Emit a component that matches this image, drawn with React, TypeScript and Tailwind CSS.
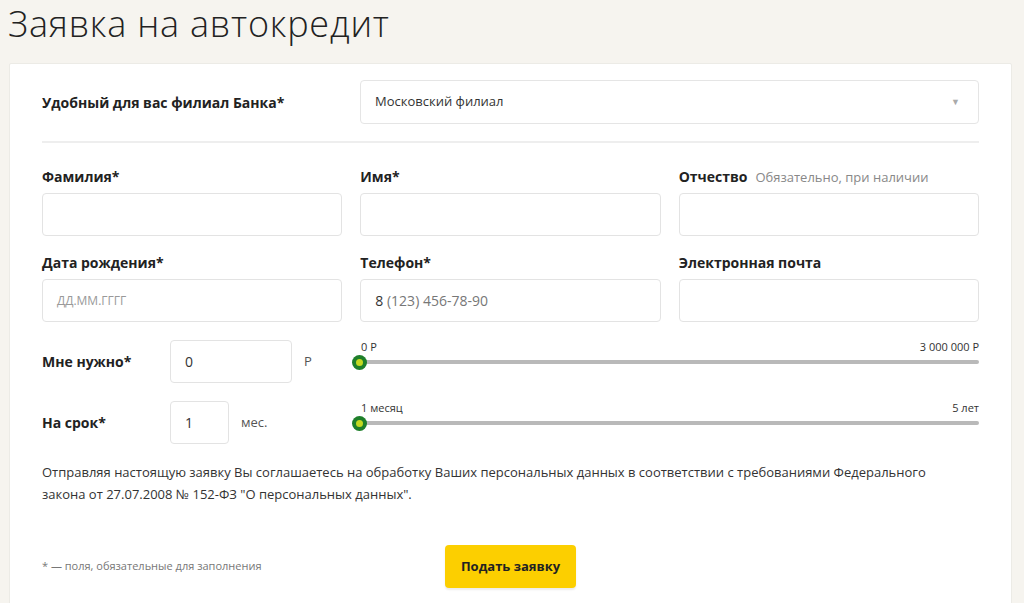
import React from "react";

const Slider = ({ min, max }: { min: string; max: string }) => (
  <div className="flex-1 flex flex-col pb-[14px]">
    <div className="flex justify-between text-[11px] leading-[14px] text-[#333] pl-[2px]">
      <span>{min}</span>
      <span>{max}</span>
    </div>
    <div className="relative h-[14px] mt-[1px] flex items-center">
      <div className="h-[4px] w-full rounded-full bg-[#b9b9b9]" />
      <div className="absolute left-[-7px] top-0 w-[15px] h-[15px] rounded-full bg-[#1e7f2a] flex items-center justify-center">
        <div className="w-[7px] h-[7px] rounded-full bg-[#c3d921]" />
      </div>
    </div>
  </div>
);

const Field = ({
  label,
  hint,
  value,
  placeholder,
}: {
  label: string;
  hint?: string;
  value?: React.ReactNode;
  placeholder?: string;
}) => (
  <div className="flex flex-col">
    <div className="h-[17px] text-[14px] leading-[17px] mb-[8px]">
      <span className="font-bold text-[#222]">{label}</span>
      {hint && <span className="ml-[8px] text-[13px] text-[#888]">{hint}</span>}
    </div>
    <div className="h-[43px] rounded-[4px] border border-[#e3e3e3] bg-white px-[14px] flex items-center text-[14px] text-[#333]">
      {value}
      {placeholder && <span className="text-[12px] text-[#999]">{placeholder}</span>}
    </div>
  </div>
);

const App = () => {
  return (
    <div
      className="min-h-screen bg-[#f6f4ef] text-[#222] pl-[9px] pr-[12px]"
      style={{ fontFamily: "'Open Sans', 'Noto Sans', sans-serif" }}
    >
      <h1 className="text-[36px] leading-[48px] font-light tracking-[0.8px] text-[#222] h-[63px] -ml-[1px]">
        Заявка на автокредит
      </h1>
      <div className="bg-white border border-[#ecebe6] rounded-[2px] px-[32px] pt-[16px] pb-[40px]">
        <div className="flex items-center">
          <div className="w-[318px] text-[14px] font-bold">Удобный для вас филиал Банка*</div>
          <div className="flex-1 h-[44px] rounded-[4px] border border-[#e5e5e5] bg-white flex items-center justify-between px-[14px] text-[13px] text-[#333]">
            <span>Московский филиал</span>
            <span className="text-[9px] text-[#aaa] mr-[4px]">▼</span>
          </div>
        </div>
        <div className="h-[2px] bg-[#eeeeee] mt-[17px] mb-[25px]" />

        <div className="grid grid-cols-3 gap-x-[18px] gap-y-[18px]">
          <Field label="Фамилия*" />
          <Field label="Имя*" />
          <Field label="Отчество" hint="Обязательно, при наличии" />
          <Field label="Дата рождения*" placeholder="ДД.ММ.ГГГГ" />
          <Field
            label="Телефон*"
            value={
              <span>
                8 <span className="text-[#777]">(123) 456-78-90</span>
              </span>
            }
          />
          <Field label="Электронная почта" />
        </div>

        <div className="flex items-center mt-[18px]">
          <div className="w-[128px] text-[14px] font-bold">Мне нужно*</div>
          <div className="w-[122px] h-[43px] rounded-[4px] border border-[#e3e3e3] flex items-center px-[14px] text-[14px] text-[#333]">
            0
          </div>
          <div className="w-[67px] pl-[12px] text-[13px] text-[#555]">Р</div>
          <Slider min="0 Р" max="3 000 000 Р" />
        </div>

        <div className="flex items-center mt-[18px]">
          <div className="w-[128px] text-[14px] font-bold">На срок*</div>
          <div className="w-[59px] h-[43px] rounded-[4px] border border-[#e3e3e3] flex items-center px-[14px] text-[14px] text-[#333]">
            1
          </div>
          <div className="w-[130px] pl-[12px] text-[13px] text-[#555]">мес.</div>
          <Slider min="1 месяц" max="5 лет" />
        </div>

        <p className="mt-[17px] text-[13px] leading-[22px] text-[#333] max-w-[905px]">
          Отправляя настоящую заявку Вы соглашаетесь на обработку Ваших персональных данных в соответствии с
          требованиями Федерального закона от 27.07.2008 № 152-ФЗ "О персональных данных".
        </p>

        <div className="flex items-center mt-[40px]">
          <div className="w-[403px] text-[11px] text-[#777]">* — поля, обязательные для заполнения</div>
          <button className="w-[131px] h-[43px] rounded-[4px] bg-[#fccf00] text-[13px] font-bold text-[#222] shadow-[0_2px_2px_rgba(0,0,0,0.08)]">
            Подать заявку
          </button>
        </div>
      </div>
    </div>
  );
};

export default App;
